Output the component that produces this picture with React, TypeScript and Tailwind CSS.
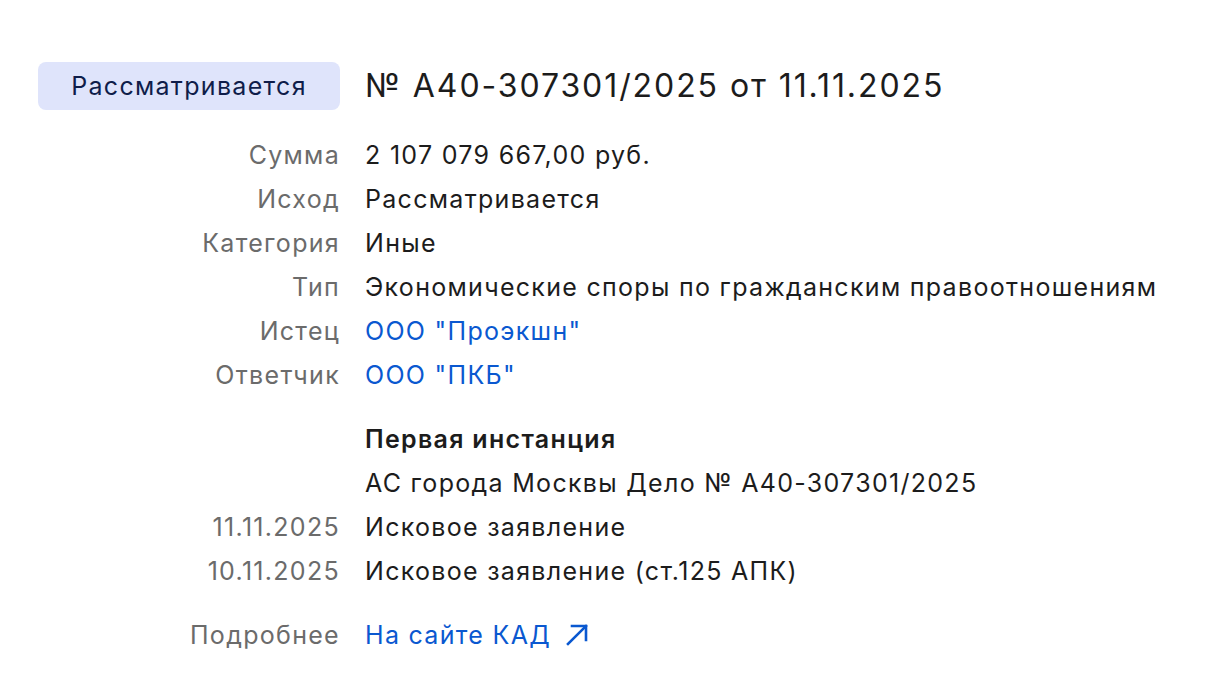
import React from "react";

const Row = ({ label, children, className = "" }: { label?: string; children: React.ReactNode; className?: string }) => (
  <>
    <div className={"text-right text-[#6b6b6b] " + className}>{label}</div>
    <div className={className}>{children}</div>
  </>
);

export default function App() {
  return (
    <div className="min-h-[692px] w-[1207px] bg-white text-[#1c1c1c]" style={{ fontFamily: "Inter, 'Noto Sans', sans-serif" }}>
      <div className="pt-[62px] pl-[38px]">
        <div className="grid grid-cols-[302px_1fr] gap-x-[25px] text-[25px] leading-[44px] tracking-[0.052em]">
          <div className="flex h-[48px] items-center justify-center rounded-[8px] bg-[#dfe4fb] text-[#0f1d4a]">
            Рассматривается
          </div>
          <div className="flex h-[48px] items-center text-[32px] tracking-[0.06em]">№ А40-307301/2025 от 11.11.2025</div>
          <div className="col-span-2 h-[23px]" />
          <Row label="Сумма">2 107 079 667,00 руб.</Row>
          <Row label="Исход">Рассматривается</Row>
          <Row label="Категория">Иные</Row>
          <Row label="Тип">Экономические споры по гражданским правоотношениям</Row>
          <Row label="Истец"><span className="text-[#0a58d0]">ООО "Проэкшн"</span></Row>
          <Row label="Ответчик"><span className="text-[#0a58d0]">ООО "ПКБ"</span></Row>
          <div className="col-span-2 h-[20px]" />
          <Row label=""><span className="font-semibold">Первая инстанция</span></Row>
          <Row label="">АС города Москвы Дело № А40-307301/2025</Row>
          <Row label="11.11.2025">Исковое заявление</Row>
          <Row label="10.11.2025">Исковое заявление (ст.125 АПК)</Row>
          <div className="col-span-2 h-[20px]" />
          <Row label="Подробнее">
            <span className="inline-flex items-center gap-[14px] text-[#0a58d0]">
              На сайте КАД
              <svg width="24" height="24" viewBox="0 0 24 24" fill="none" stroke="currentColor" strokeWidth="2.6" strokeLinecap="square">
                <path d="M3 21 21 3" />
                <path d="M7 3h14v14" />
              </svg>
            </span>
          </Row>
        </div>
      </div>
    </div>
  );
}
